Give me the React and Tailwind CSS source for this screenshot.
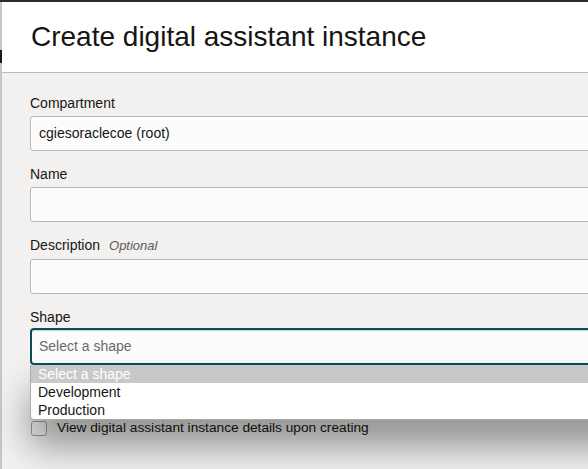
import React from 'react';

const font = { fontFamily: '"Liberation Sans", Arial, sans-serif' };

const Field = ({ label, optional, gap = 'mb-[3px]', children }) => (
  <div className="flex flex-col">
    <label className={`text-[14px] leading-[20px] text-[#161513] ${gap}`}>
      {label}
      {optional && <span className="ml-[9px] italic text-[13px] text-[#5b5a58]">{optional}</span>}
    </label>
    {children}
  </div>
);

export default function App() {
  return (
    <div className="w-[588px] h-[469px] overflow-hidden flex flex-col bg-[#f2f1ef]" style={font}>
      <div className="h-[2px] bg-[#2b2b2b] shrink-0" />
      <div className="flex flex-1 min-h-0">
        <div className="w-[2px] shrink-0 bg-[#c6c6c6] flex flex-col">
          <div className="h-[48px]" />
          <div className="h-[13px] bg-[#1a1a1a]" />
        </div>
        <div className="flex-1 min-w-0 flex flex-col">
          <header className="h-[71px] shrink-0 bg-white border-b border-[#b9b9b9] flex items-center pl-[29px]">
            <h1 className="text-[28px] text-[#161513] leading-none whitespace-nowrap">Create digital assistant instance</h1>
          </header>
          <div className="flex-1 pl-[28px] pt-[20px] flex flex-col gap-[13px]">
            <Field label="Compartment">
              <div className="w-[620px] h-[35px] bg-[#fcfcfc] border border-[#b9b9b9] rounded-[3px] flex items-center pl-[8px] text-[14px] text-[#161513]">
                cgiesoraclecoe (root)
              </div>
            </Field>
            <Field label="Name">
              <div className="w-[620px] h-[35px] bg-[#fcfcfc] border border-[#b9b9b9] rounded-[3px]" />
            </Field>
            <Field label="Description" optional="Optional">
              <div className="w-[620px] h-[35px] bg-[#fcfcfc] border border-[#b9b9b9] rounded-[3px]" />
            </Field>
            <Field label="Shape" gap="mb-[1px]">
              <div className="relative w-[620px]">
                <div className="h-[37px] bg-[#fcfcfc] border-2 border-[#0e4a5c] rounded-[4px] shadow-[inset_0_1px_0_#cfcfcf] flex items-center pl-[7px] text-[14px] text-[#6b6a68]">
                  Select a shape
                </div>
                <div className="absolute left-0 top-full w-full bg-white border border-t-0 border-[#ababab] rounded-b-[4px] shadow-[0_26px_36px_rgba(0,0,0,0.4)] z-10 text-[14px] leading-[18px]">
                  <div className="h-[18px] bg-[#c8c8c8] text-white pl-[7px]">Select a shape</div>
                  <div className="h-[18px] text-[#161513] pl-[7px]">Development</div>
                  <div className="h-[18px] text-[#161513] pl-[7px]">Production</div>
                </div>
              </div>
            </Field>
            <div className="flex items-center mt-[40px] pl-[1px]">
              <div className="w-[16px] h-[15px] border border-[#9c9c9c] rounded-[3px] bg-[#f6f6f6]" />
              <span className="ml-[10px] text-[13.7px] text-[#161513] whitespace-nowrap">View digital assistant instance details upon creating</span>
            </div>
          </div>
        </div>
      </div>
    </div>
  );
}
